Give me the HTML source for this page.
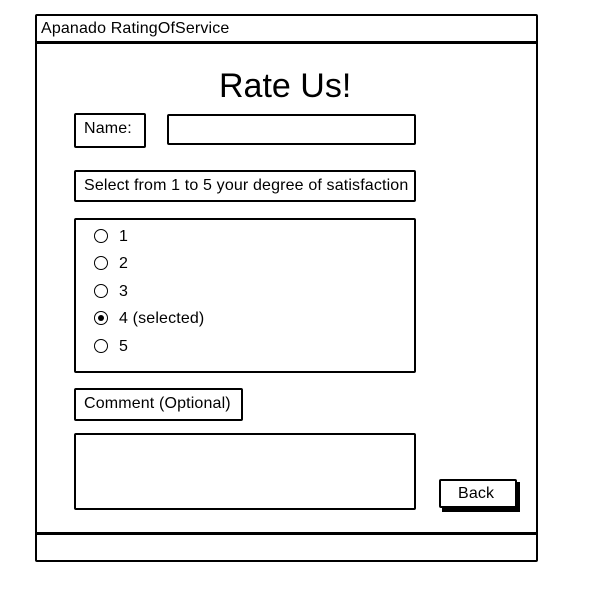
<!DOCTYPE html>
<html><head><style>
body{margin:0;width:596px;height:589px;background:#fff;font-family:"Liberation Sans",sans-serif;color:#000;position:relative;overflow:hidden}
.b{position:absolute;border:2px solid #000;box-sizing:border-box;border-radius:2px}
.t{position:absolute;font-size:16px;letter-spacing:0.15px;white-space:nowrap}
.r{position:absolute;width:14px;height:14px;border:1.5px solid #000;border-radius:50%;box-sizing:border-box;left:94px}
</style></head><body>
<div class="b" style="left:35px;top:14px;width:503px;height:548px;border-width:2.5px"></div>
<div style="position:absolute;left:35px;top:41px;width:503px;height:2.5px;background:#000"></div>
<div style="position:absolute;left:35px;top:532px;width:503px;height:2.5px;background:#000"></div>
<div class="t" style="left:41px;top:20px">Apanado RatingOfService</div>
<div class="t" style="left:219px;top:67px;font-size:34px;letter-spacing:0">Rate Us!</div>
<div class="b" style="left:74px;top:113px;width:72px;height:35px"></div>
<div class="t" style="left:84px;top:120px">Name:</div>
<div class="b" style="left:167px;top:114px;width:249px;height:31px"></div>
<div class="b" style="left:74px;top:170px;width:342px;height:32px"></div>
<div class="t" style="left:84px;top:177px">Select from 1 to 5 your degree of satisfaction</div>
<div class="b" style="left:74px;top:218px;width:342px;height:155px"></div>
<div class="r" style="top:229px"></div><div class="t" style="left:119px;top:228px">1</div>
<div class="r" style="top:256px"></div><div class="t" style="left:119px;top:255px">2</div>
<div class="r" style="top:284px"></div><div class="t" style="left:119px;top:283px">3</div>
<div class="r" style="top:311px"></div><div style="position:absolute;left:98px;top:315px;width:6px;height:6px;border-radius:50%;background:#000"></div><div class="t" style="left:119px;top:310px">4 (selected)</div>
<div class="r" style="top:339px"></div><div class="t" style="left:119px;top:338px">5</div>
<div class="b" style="left:74px;top:388px;width:169px;height:33px"></div>
<div class="t" style="left:84px;top:395px">Comment (Optional)</div>
<div class="b" style="left:74px;top:433px;width:342px;height:77px"></div>
<div style="position:absolute;left:442px;top:482px;width:78px;height:30px;background:#000"></div>
<div class="b" style="left:439px;top:479px;width:78px;height:29px;background:#fff"></div>
<div class="t" style="left:458px;top:485px">Back</div>
</body></html>
